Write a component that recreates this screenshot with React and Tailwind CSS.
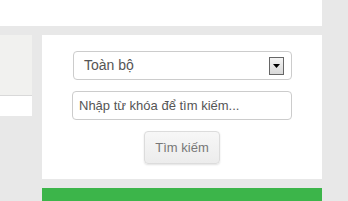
export default function App() {
  return (
    <div
      className="w-[348px] h-[201px] overflow-hidden bg-[#e8e8e8] flex"
      style={{ fontFamily: '"Liberation Sans", Arial, sans-serif' }}
    >
      <div className="w-[322px] flex flex-col shrink-0">
        <div className="h-[26px] bg-white shrink-0" />
        <div className="h-[9px] shrink-0" />
        <div className="flex gap-[10px] shrink-0">
          {/* left column */}
          <div className="w-[32px] flex flex-col">
            <div className="h-[61px] bg-[#f1f1ef] border-b border-[#d9d9d9]" />
            <div className="h-[20px] bg-white" />
          </div>
          {/* right column */}
          <div className="flex-1 flex flex-col">
            <div className="bg-white h-[144px] shrink-0 flex flex-col items-center pt-[16px]">
              <div className="w-[219px] h-[29px] ml-[1px] rounded-[4px] border border-[#cccccc] flex items-center justify-between pl-[10px] pr-[7px] text-[14px] text-[#555]">
                <span>Toàn bộ</span>
                <div className="w-[15px] h-[18px] border border-[#666] bg-gradient-to-b from-[#f4f4f4] to-[#d8d8d8] flex items-center justify-center">
                  <svg width="7" height="4" viewBox="0 0 7 4">
                    <path d="M0 0h7L3.5 4z" fill="#000" />
                  </svg>
                </div>
              </div>
              <div className="w-[220px] h-[29px] mt-[11px] rounded-[4px] border border-[#cccccc] flex items-center pl-[6px] text-[13px] text-[#555]">
                Nhập từ khóa để tìm kiếm...
              </div>
              <div className="mt-[11px] w-[76px] h-[33px] rounded-[4px] border border-[#dcdcdc] bg-gradient-to-b from-[#f7f7f7] to-[#ececec] shadow-[0_1px_2px_rgba(0,0,0,0.12)] flex items-center justify-center text-[13px] text-[#777]">
                Tìm kiếm
              </div>
            </div>
            <div className="h-[9px] shrink-0" />
            <div className="h-[20px] shrink-0 bg-[#3cb54a]" />
          </div>
        </div>
      </div>
    </div>
  );
}
